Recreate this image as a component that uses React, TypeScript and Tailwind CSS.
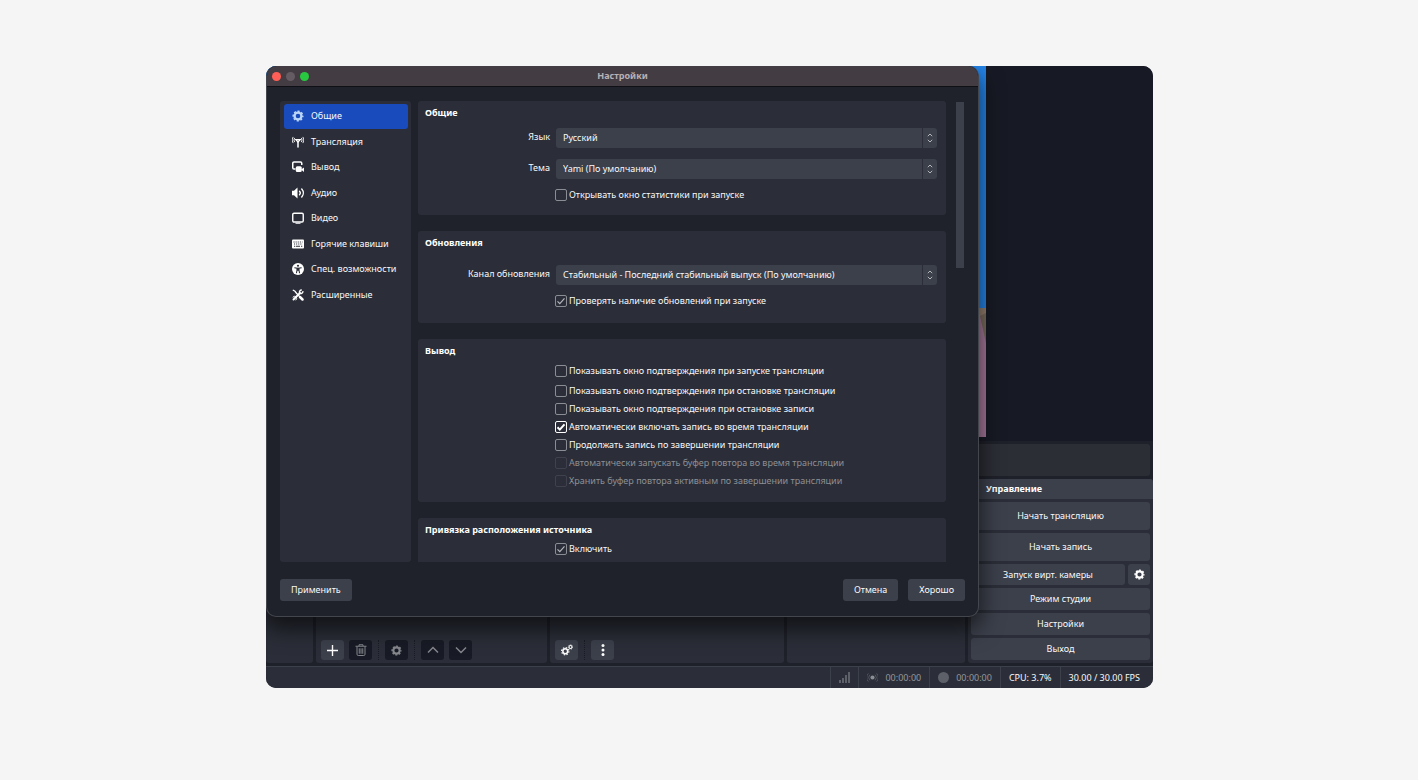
import React, { useState } from 'react'

type IconProps = { className?: string }

function GearIcon({ className }: IconProps) {
  return (
    <svg className={className} viewBox="0 0 24 24" fill="none" stroke="currentColor">
      <circle cx="12" cy="12" r="6.9" strokeWidth="4.6" />
      <circle cx="12" cy="12" r="9.6" strokeWidth="3" strokeDasharray="4.2 3.34" strokeDashoffset="2.1" />
    </svg>
  )
}

function StreamIcon({ className }: IconProps) {
  return (
    <svg className={className} viewBox="0 0 24 24" fill="none" stroke="currentColor" strokeLinecap="round">
      <path d="M12 10v12" strokeWidth="3" />
      <path d="M7.5 7l4.500 5 4.500-5z" strokeWidth="2.4" />
      <path d="M4.8 4.5a6 6 0 0 0 0 7M19.2 4.5a6 6 0 0 1 0 7" strokeWidth="1.8" />
      <path d="M1.8 2.5a10 10 0 0 0 0 11M22.2 2.5a10 10 0 0 1 0 11" strokeWidth="1.8" />
    </svg>
  )
}

function OutputIcon({ className }: IconProps) {
  return (
    <svg className={className} viewBox="0 0 24 24" fill="none" stroke="currentColor">
      <path d="M19.5 8V4.500a2.500 2.500 0 0 0-2.500-2.500H4A2.500 2.500 0 0 0 1.500 4.500v9A2.500 2.500 0 0 0 4 16h3" strokeWidth="3" />
      <rect x="7.500" y="10.500" width="12" height="11.500" rx="3" fill="currentColor" stroke="none" />
      <path d="M18 17l6-4v9z" fill="currentColor" stroke="none" />
    </svg>
  )
}

function AudioIcon({ className }: IconProps) {
  return (
    <svg className={className} viewBox="0 0 24 24" fill="none" stroke="currentColor" strokeLinecap="round">
      <path d="M0 7.500h4L11 1v22l-7-6.500H0z" fill="currentColor" stroke="none" />
      <path d="M15 8.500a5 5 0 0 1 0 7" strokeWidth="2.600" />
      <path d="M19.500 4a12 12 0 0 1 0 16" strokeWidth="2.800" />
    </svg>
  )
}

function VideoIcon({ className }: IconProps) {
  return (
    <svg className={className} viewBox="0 0 24 24" fill="none" stroke="currentColor">
      <rect x="1.500" y="2.500" width="21" height="17.500" rx="2.500" strokeWidth="2.800" />
      <path d="M7 22.600h10" strokeWidth="2.200" />
    </svg>
  )
}

function KeyboardIcon({ className }: IconProps) {
  return (
    <svg className={className} viewBox="0 0 24 24">
      <rect x="0" y="3" width="24" height="18" rx="2" fill="currentColor" />
      <path d="M3 8h18M4 12h17" stroke="#2b2e38" strokeWidth="2" strokeDasharray="2.200 2" />
      <path d="M4 16.500h2.500M8 16.500h8M18 16.500h2.500" stroke="#2b2e38" strokeWidth="2" />
    </svg>
  )
}

function AccessIcon({ className }: IconProps) {
  return (
    <svg className={className} viewBox="0 0 24 24">
      <circle cx="12" cy="12" r="12" fill="currentColor" />
      <circle cx="12" cy="5.500" r="2.200" fill="#2b2e38" />
      <path d="M5.500 9.500l4.500 1v4l-1 5M18.500 9.500l-4.500 1v4l1 5" fill="none" stroke="#2b2e38" strokeWidth="2.200" strokeLinecap="round" />
      <path d="M10 9.500h4v6h-4z" fill="#2b2e38" />
    </svg>
  )
}

function ToolsIcon({ className }: IconProps) {
  return (
    <svg className={className} viewBox="0 0 24 24" fill="none" stroke="currentColor" strokeLinecap="round">
      <path d="M2.500 2.500l3.500 2 3 4 5 5" strokeWidth="2.600" />
      <path d="M16 16l5 5" strokeWidth="5" />
      <path d="M3 21L16 8" strokeWidth="3.800" />
      <path d="M21.800 5.500a4.200 4.200 0 0 1-6.300 3 4.200 4.200 0 0 1 3-6.300" strokeWidth="3" />
      <path d="M2 16a4 4 0 0 1 6 6" strokeWidth="2" />
    </svg>
  )
}

function TrashIcon({ className }: IconProps) {
  return (
    <svg className={className} viewBox="0 0 24 24" fill="none" stroke="currentColor" strokeWidth="2">
      <path d="M1 4.500h22M8 4V1.500h8V4" />
      <path d="M4 5v15.500A2.500 2.500 0 0 0 6.500 23h11a2.500 2.500 0 0 0 2.500-2.500V5" />
      <path d="M8.500 8.500v11M12 8.500v11M15.500 8.500v11" />
    </svg>
  )
}

function GearsIcon({ className }: IconProps) {
  return (
    <svg className={className} viewBox="0 0 24 24" fill="none" stroke="currentColor">
      <circle cx="8.500" cy="14.500" r="4.800" strokeWidth="3" />
      <circle cx="8.500" cy="14.500" r="7.300" strokeWidth="2.400" strokeDasharray="2.900 2.833" />
      <circle cx="19" cy="6" r="3" strokeWidth="2.400" />
      <circle cx="19" cy="6" r="4.500" strokeWidth="1.400" strokeDasharray="1.800 1.734" />
    </svg>
  )
}

function ChevronIcon({ className, down }: IconProps & { down?: boolean }) {
  return (
    <svg className={className} viewBox="0 0 12 12" fill="none" stroke="currentColor" strokeWidth="1.500">
      <path d={down ? 'M1 3.500l5 5 5-5' : 'M1 8.500l5-5 5 5'} />
    </svg>
  )
}

const tabs = [
  { name: 'Общие', icon: GearIcon },
  { name: 'Трансляция', icon: StreamIcon },
  { name: 'Вывод', icon: OutputIcon },
  { name: 'Аудио', icon: AudioIcon },
  { name: 'Видео', icon: VideoIcon },
  { name: 'Горячие клавиши', icon: KeyboardIcon },
  { name: 'Спец. возможности', icon: AccessIcon },
  { name: 'Расширенные', icon: ToolsIcon },
]

function Section({ title, className, children }: { title: string; className?: string; children: React.ReactNode }) {
  return (
    <section className={`shrink-0 rounded-[3px] bg-[#2b2e38] pl-[7px] pr-[9px] pt-1 ${className ?? ''}`}>
      <h2 className="h-4 font-bold leading-4 text-white">{title}</h2>
      {children}
    </section>
  )
}

function SelectRow({ id, label, value }: { id: string; label: string; value: string }) {
  return (
    <div className="flex h-5 gap-1.5">
      <label htmlFor={id} className="w-[125px] shrink-0 text-right leading-[18px]">{label}</label>
      <div className="relative flex-1">
        <select id={id} className="block h-5 w-full appearance-none rounded-[3px] bg-[#3c404b] px-[7px] leading-5 outline-none">
          <option>{value}</option>
        </select>
        <span className="pointer-events-none absolute inset-y-0 right-0 flex w-[15px] items-center justify-center border-l border-[#2b2e38] text-[#b4b6bc]">
          <svg className="h-[10px] w-1.5" viewBox="0 0 6 10" fill="none" stroke="currentColor" strokeWidth="1">
            <path d="M.8 3.200L3 1l2.200 2.200M.8 6.800L3 9l2.200-2.200" />
          </svg>
        </span>
      </div>
    </div>
  )
}

type CheckProps = { label: string; checked?: boolean; active?: boolean; disabled?: boolean }

function CheckRow({ label, checked, active, disabled }: CheckProps) {
  const box = active ? 'border-white text-white' : disabled ? 'border-[#3f424c] text-[#3f424c]' : 'border-[#8b8d94] text-[#b4b6bc]'
  return (
    <label className={`flex h-[18px] items-center gap-0.5 pl-[130px] ${disabled ? 'text-[#8d8f94]' : ''}`}>
      <span className={`relative size-3 shrink-0 ${box}`}>
        <input
          type="checkbox"
          defaultChecked={checked}
          disabled={disabled}
          className="peer block size-3 appearance-none rounded-[2px] border border-inherit"
        />
        <svg
          className="pointer-events-none absolute inset-0 hidden size-3 peer-checked:block"
          viewBox="0 0 12 12"
          fill="none"
          stroke="currentColor"
          strokeWidth={active ? 2 : 1.2}
        >
          <path d="M2.500 6.300l2.300 2.300 4.700-5.300" />
        </svg>
      </span>
      <span>{label}</span>
    </label>
  )
}

function SettingsDialog() {
  const [tab, setTab] = useState(0)
  return (
    <div className="absolute left-0 right-[174px] top-0 rounded-[10px] border border-t-0 border-[#44464d] bg-[#1f222b] shadow-[0_10px_22px_2px_rgba(0,0,0,0.6)]">
      <header className="flex h-[21px] items-center gap-[5px] rounded-t-[10px] border-b border-[#0f1016] bg-[#443c43] pl-[5px] pr-[47px]">
        <span className="size-[9px] rounded-full bg-[#ff5f57]"></span>
        <span className="size-[9px] rounded-full bg-[#655c63]"></span>
        <span className="size-[9px] rounded-full bg-[#28c840]"></span>
        <h1 className="flex-1 text-center font-bold text-[#b7b2b6]">Настройки</h1>
      </header>
      <div className="px-[13px] pb-[15px] pt-3.5">
        <div className="flex h-[461px]">
          <nav className="mr-[7px] w-[131px] shrink-0 rounded-[3px] bg-[#2b2e38] py-[3px] pl-1 pr-[3px]">
            <div className="grid h-[203px] grid-rows-8 gap-px">
              {tabs.map((t, i) => (
                <button
                  key={t.name}
                  onClick={() => setTab(i)}
                  className={`flex items-center gap-[7px] rounded-[3px] pl-2 text-left ${i === tab ? 'bg-[#194bbd]' : ''}`}
                >
                  <t.icon className={`size-3 ${i === tab ? 'text-[#bcd6f7]' : 'text-white'}`} />
                  {t.name}
                </button>
              ))}
            </div>
          </nav>
          <div className="flex flex-1 flex-col gap-4 overflow-hidden">
            <Section title="Общие" className="pb-[11px]">
              <div className="mt-[7px] flex flex-col gap-[11px]">
                <SelectRow id="lang" label="Язык" value="Русский" />
                <SelectRow id="theme" label="Тема" value="Yami (По умолчанию)" />
              </div>
              <div className="mt-[7px]">
                <CheckRow label="Открывать окно статистики при запуске" />
              </div>
            </Section>
            <Section title="Обновления" className="pb-[13px]">
              <div className="mt-3.5">
                <SelectRow id="channel" label="Канал обновления" value="Стабильный - Последний стабильный выпуск (По умолчанию)" />
              </div>
              <div className="mt-[7px]">
                <CheckRow label="Проверять наличие обновлений при запуске" checked />
              </div>
            </Section>
            <Section title="Вывод" className="pb-3">
              <div className="mt-[3px] mb-0.5">
                <CheckRow label="Показывать окно подтверждения при запуске трансляции" />
              </div>
              <CheckRow label="Показывать окно подтверждения при остановке трансляции" />
              <CheckRow label="Показывать окно подтверждения при остановке записи" />
              <CheckRow label="Автоматически включать запись во время трансляции" checked active />
              <CheckRow label="Продолжать запись по завершении трансляции" />
              <CheckRow label="Автоматически запускать буфер повтора во время трансляции" disabled />
              <CheckRow label="Хранить буфер повтора активным по завершении трансляции" disabled />
            </Section>
            <Section title="Привязка расположения источника" className="pb-3">
              <div className="mt-0.5">
                <CheckRow label="Включить" checked />
              </div>
            </Section>
          </div>
          <div className="ml-2.5 w-[9px] pr-px pt-px">
            <div className="h-[166px] bg-[#3c404b]"></div>
          </div>
        </div>
        <footer className="mt-[17px] flex gap-2.5">
          <button className="h-[22px] rounded-[3px] bg-[#3c404b] px-[11px]">Применить</button>
          <button className="ml-auto h-[22px] rounded-[3px] bg-[#3c404b] px-[11px]">Отмена</button>
          <button className="h-[22px] rounded-[3px] bg-[#3c404b] px-[11px]">Хорошо</button>
        </footer>
      </div>
    </div>
  )
}

function ToolButton({ label, dim, children }: { label: string; dim?: boolean; children: React.ReactNode }) {
  return (
    <button
      aria-label={label}
      className={`flex h-5 w-[23px] items-center justify-center rounded-[3px] ${dim ? 'bg-[#181a25] text-[#85878d]' : 'bg-[#3c404b] text-white'}`}
    >
      {children}
    </button>
  )
}

function Divider() {
  return <span className="mx-px h-5 border-l border-dotted border-[#1a1c25]"></span>
}

function Preview() {
  return (
    <div className="flex h-[375px] bg-[#171a24] pb-1 pr-[167px]">
      <div className="flex flex-1 flex-col items-end bg-[#2485ea]">
        <svg className="mt-auto h-[129px] w-full" viewBox="0 0 720 129" preserveAspectRatio="xMaxYMin slice">
          <rect width="720" height="129" fill="#a6789c" />
          <path d="M0 0h720v32l-6-26-6 10H0z" fill="#94806f" />
          <path d="M714 8l6-3v30z" fill="#7a6d5f" />
        </svg>
      </div>
    </div>
  )
}

function Controls() {
  const btn = 'rounded-[3px] bg-[#3c404b]'
  return (
    <div className="flex w-[185px] flex-col rounded-[3px] bg-[#2b2e38] pb-[3px]">
      <h2 className="h-5 rounded-t-[3px] bg-[#3c404b] pl-[18px] font-bold leading-5 text-white">Управление</h2>
      <div className="mt-[3px] flex flex-col gap-[3px] px-[3px]">
        <button className={`h-7 ${btn}`}>Начать трансляцию</button>
        <button className={`h-7 ${btn}`}>Начать запись</button>
        <div className="flex gap-[3px]">
          <button className={`h-[21px] flex-1 ${btn}`}>Запуск вирт. камеры</button>
          <button aria-label="Настроить" className={`flex w-[22px] items-center justify-center text-white ${btn}`}>
            <GearIcon className="size-[11px]" />
          </button>
        </div>
        <button className={`h-[22px] ${btn}`}>Режим студии</button>
        <button className={`h-[22px] ${btn}`}>Настройки</button>
        <button className={`h-[22px] ${btn}`}>Выход</button>
      </div>
    </div>
  )
}

function StatusBar() {
  const cell = 'flex items-center border-l border-[#3c404b] px-2'
  return (
    <footer className="flex h-[22px] justify-end border-t border-[#3c404b] bg-[#2b2e38] pr-[5px]">
      <div className={cell}>
        <svg className="size-[11px]" viewBox="0 0 11 11" fill="#5d6068">
          <path d="M0 8h2v3H0zM3 6h2v5H3zM6 3h2v8H6zM9 0h2v11H9z" />
        </svg>
      </div>
      <div className={`${cell} gap-[7px] text-[#94969b]`}>
        <svg className="size-[11px]" viewBox="0 0 24 24" fill="none" stroke="#555861" strokeWidth="2">
          <circle cx="12" cy="12" r="4.500" fill="#8b8d94" stroke="none" />
          <path d="M6.500 6a8.500 8.500 0 0 0 0 12M17.500 6a8.500 8.500 0 0 1 0 12M3 3a13 13 0 0 0 0 18M21 3a13 13 0 0 1 0 18" />
        </svg>
        00:00:00
      </div>
      <div className={`${cell} gap-[7px] text-[#94969b]`}>
        <span className="size-[11px] rounded-full bg-[#5d6068]"></span>
        00:00:00
      </div>
      <div className={cell}>CPU: 3.7%</div>
      <div className={cell}>30.00 / 30.00 FPS</div>
    </footer>
  )
}

export default function App() {
  return (
    <div className="min-h-screen bg-[#f5f5f5] pt-[66px] font-['Noto_Sans','Open_Sans',sans-serif] text-[9px] leading-4 text-[#f8f8f9]">
      <div className="mx-auto max-w-[888px] pl-px">
        <main className="relative overflow-hidden rounded-[10px] bg-[#1f212a]">
          <Preview />
          <div className="mr-[3px] mt-[3px] h-8 rounded-[3px] bg-[#2c2e36]"></div>
          <div className="mt-[3px] flex gap-[3px]">
            <div className="w-[47px] rounded-[3px] bg-[#2b2e38]"></div>
            <div className="flex w-[231px] items-end gap-[5px] rounded-[3px] bg-[#2b2e38] pb-[3px] pl-[5px]">
              <ToolButton label="Добавить">
                <svg className="size-[11px]" viewBox="0 0 11 11" stroke="currentColor" strokeWidth="1.400">
                  <path d="M5.500 0v11M0 5.500h11" />
                </svg>
              </ToolButton>
              <ToolButton label="Удалить" dim><TrashIcon className="size-3" /></ToolButton>
              <Divider />
              <ToolButton label="Свойства" dim><GearIcon className="size-[11px]" /></ToolButton>
              <Divider />
              <ToolButton label="Вверх" dim><ChevronIcon className="size-3" /></ToolButton>
              <ToolButton label="Вниз" dim><ChevronIcon className="size-3" down /></ToolButton>
            </div>
            <div className="flex w-[234px] items-end gap-[5px] rounded-[3px] bg-[#2b2e38] pb-[3px] pl-[5px]">
              <ToolButton label="Микшер"><GearsIcon className="size-3" /></ToolButton>
              <Divider />
              <ToolButton label="Меню">
                <svg className="size-3" viewBox="0 0 12 12" fill="currentColor">
                  <circle cx="6" cy="1.500" r="1.500" />
                  <circle cx="6" cy="6" r="1.500" />
                  <circle cx="6" cy="10.500" r="1.500" />
                </svg>
              </ToolButton>
            </div>
            <div className="flex-1 rounded-[3px] bg-[#2b2e38]"></div>
            <Controls />
          </div>
          <div className="h-[3px]"></div>
          <StatusBar />
          <SettingsDialog />
        </main>
      </div>
    </div>
  )
}
